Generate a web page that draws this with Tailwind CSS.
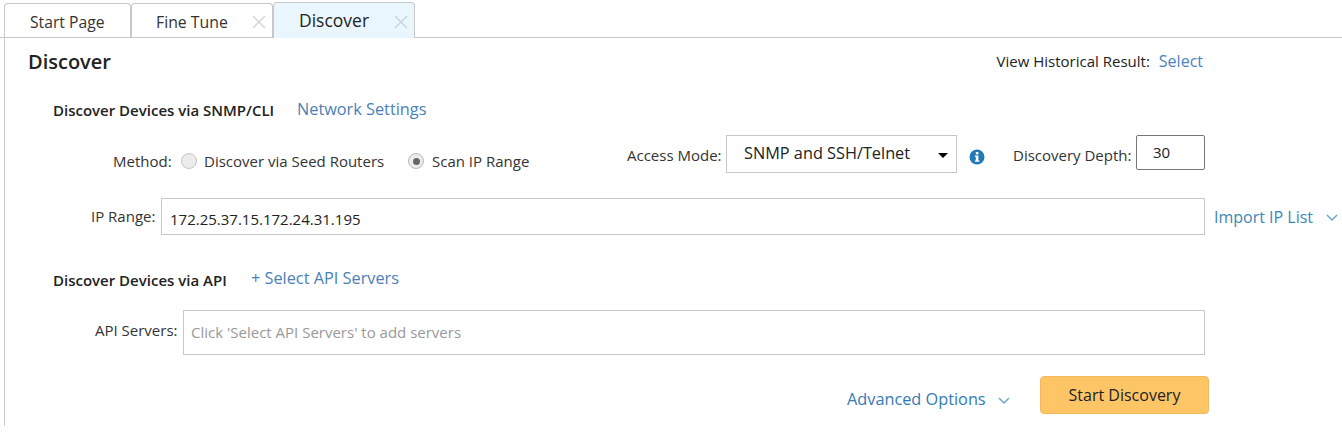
<!DOCTYPE html>
<html lang="en">
  <head>
    <meta charset="UTF-8" />
    <title>Discover</title>
    <script src="https://cdn.jsdelivr.net/npm/@tailwindcss/browser@4"></script>
  </head>
  <body class="bg-white h-[438px] overflow-hidden whitespace-nowrap font-['Open_Sans',sans-serif] text-[15px] text-[#333]">
    <!-- Tabs -->
    <div class="flex items-end h-[38px] pl-[4px] border-b border-[#c8c8c8]">
      <div class="w-[127px] h-[34px] border border-b-0 border-[#c8c8c8] rounded-t-[4px] pl-[25px] pt-[7px] text-[15.7px] leading-[22px] text-[#333]">Start Page</div>
      <div class="relative w-[142px] h-[34px] border border-b-0 border-[#c8c8c8] rounded-t-[4px] pl-[24px] pt-[7px] text-[15.8px] leading-[22px] text-[#333]">
        Fine Tune
        <svg class="absolute left-[120px] top-[11px]" width="14" height="14" viewBox="0 0 14 14" fill="none" stroke="#d4d4d4" stroke-width="1.4"><path d="M1 1l12 12M13 1L1 13" /></svg>
      </div>
      <div class="relative w-[142px] h-[36px] -mb-px border border-b-0 border-[#c8c8c8] rounded-t-[4px] bg-[#eaf6fd] pl-[25px] pt-[5px] text-[17.5px] leading-[24px] text-[#222]">
        Discover
        <svg class="absolute left-[120px] top-[12px]" width="14" height="14" viewBox="0 0 14 14" fill="none" stroke="#c9d3d9" stroke-width="1.4"><path d="M1 1l12 12M13 1L1 13" /></svg>
      </div>
    </div>

    <!-- Panel -->
    <div class="ml-[4px] h-[388px] border-l border-[#c8c8c8] pl-[23px]">
      <div class="flex justify-between items-center h-[48px] pr-[139px]">
        <h1 class="text-[20px] font-semibold text-[#222]">Discover</h1>
        <div class="flex items-center -mt-[2px]">
          <span class="text-[#222] mt-[1px]">View Historical Result:</span>
          <a class="ml-[9px] text-[16px] text-[#4a83bd]">Select</a>
        </div>
      </div>

      <!-- SNMP/CLI -->
      <div class="flex items-center h-[24px] mt-[12px] pl-[25px]">
        <span class="w-[220px] font-semibold text-[#222]">Discover Devices via SNMP/CLI</span>
        <a class="ml-[24px] text-[16.3px] text-[#4a7fb8] -mt-[2px]">Network Settings</a>
      </div>

      <div class="flex items-start h-[38px] mt-[13px]">
        <label class="ml-[85px] mt-[16px] w-[68px] leading-[20px]">Method:</label>
        <span class="mt-[18px] w-[16px] h-[16px] rounded-full border border-[#c4c4c4] bg-[#ececec]"></span>
        <span class="ml-[7px] mt-[16px] w-[180px] leading-[20px]">Discover via Seed Routers</span>
        <span class="ml-[24px] mt-[18px] w-[16px] h-[16px] rounded-full border border-[#b8b8b8] bg-[#ececec] flex items-center justify-center">
          <span class="w-[7px] h-[7px] rounded-full bg-[#666]"></span>
        </span>
        <span class="ml-[8px] mt-[16px] w-[97px] leading-[20px]">Scan IP Range</span>

        <label class="ml-[98px] mt-[10px] w-[99px] leading-[20px]">Access Mode:</label>
        <div class="relative w-[231px] h-[38px] border border-[#c8c8c8] pl-[17px] leading-[34px] text-[16.3px] text-[#222]">
          SNMP and SSH/Telnet
          <span class="absolute right-[8px] top-[17px] w-0 h-0 border-x-[5px] border-x-transparent border-t-[5px] border-t-black"></span>
        </div>
        <svg class="ml-[12px] mt-[14px]" width="16" height="16" viewBox="0 0 16 16">
          <circle cx="8" cy="8" r="7.5" fill="#1f7ab5" />
          <rect x="6.8" y="3" width="2.6" height="2.4" fill="#fff" />
          <path d="M5.8 6.5h3.6v5h1v1.3H5.8v-1.3h1V7.8h-1z" fill="#fff" />
        </svg>
        <label class="ml-[28px] mt-[10px] w-[123px] leading-[20px]">Discovery Depth:</label>
        <div class="w-[69px] h-[35px] border border-[#777] rounded-[2px] pl-[16px] leading-[33px] text-[#222]">30</div>
      </div>

      <div class="flex items-center h-[37px] mt-[25px]">
        <label class="ml-[63px] w-[70px]">IP Range:</label>
        <div class="w-[1044px] h-[37px] border border-[#c8c8c8] pl-[8px] leading-[41px] text-[#222]">172.25.37.15.172.24.31.195</div>
        <a class="ml-[9px] text-[16px] text-[#3d87b8]">Import IP List</a>
        <svg class="ml-[13px] mt-[3px]" width="12" height="8" viewBox="0 0 12 8" fill="none" stroke="#6fa6cc" stroke-width="1.5"><path d="M1 1l5 5 5-5" /></svg>
      </div>

      <!-- API -->
      <div class="flex items-center h-[24px] mt-[33px] pl-[25px]">
        <span class="w-[174px] font-semibold text-[#222]">Discover Devices via API</span>
        <a class="ml-[24px] text-[16.3px] text-[#4a7fb8] -mt-[3px]">+ Select API Servers</a>
      </div>

      <div class="flex items-center h-[45px] mt-[18px]">
        <label class="ml-[67px] w-[88px] -mt-[4px]">API Servers:</label>
        <div class="w-[1022px] h-[45px] border border-[#c8c8c8] pl-[7px] leading-[43px] text-[#999]">Click 'Select API Servers' to add servers</div>
      </div>

      <div class="flex items-center h-[38px] mt-[21px]">
        <a class="ml-[819px] w-[139px] mt-[8px] text-[16.3px] text-[#337ab7]">Advanced Options</a>
        <svg class="ml-[12px] mt-[11px]" width="12" height="8" viewBox="0 0 12 8" fill="none" stroke="#6fa6cc" stroke-width="1.5"><path d="M1 1l5 5 5-5" /></svg>
        <button class="ml-[30px] w-[169px] h-[38px] pb-[1px] bg-[#fdc566] border border-[#f5b95c] rounded-[4px] text-[16px] text-[#222]">Start Discovery</button>
      </div>
    </div>
  </body>
</html>
